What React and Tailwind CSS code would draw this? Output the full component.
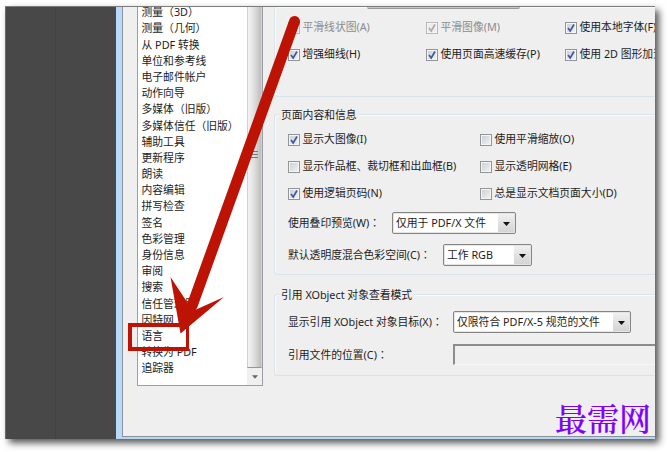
import clsx from 'clsx'

const CATEGORIES = [
  '测量（3D）',
  '测量（几何）',
  '从 PDF 转换',
  '单位和参考线',
  '电子邮件帐户',
  '动作向导',
  '多媒体（旧版）',
  '多媒体信任（旧版）',
  '辅助工具',
  '更新程序',
  '朗读',
  '内容编辑',
  '拼写检查',
  '签名',
  '色彩管理',
  '身份信息',
  '审阅',
  '搜索',
  '信任管理器',
  '因特网',
  '语言',
  '转换为 PDF',
  '追踪器',
]

function Check({ label, checked, disabled, className }) {
  return (
    <div className={clsx('flex h-[27px] shrink-0 items-center whitespace-nowrap', className)}>
      <span className={clsx(
        'flex h-[12px] w-[12px] shrink-0 items-center justify-center border shadow-[inset_0_0_0_1px_#f6f6f6]',
        disabled ? 'border-[#b9b9b9] bg-[#ececec]' : 'border-[#929496] bg-linear-to-br from-[#c9cdd2] to-[#f4f5f6]'
      )}>
        {checked && (
          <svg viewBox="0 0 10 10" className="h-[10px] w-[10px]">
            <path d="M2 5 L4.2 8 L8 1.5" fill="none" strokeWidth="1.7" stroke={disabled ? '#ababab' : '#4058a5'} />
          </svg>
        )}
      </span>
      <span className={clsx('ml-[2.5px]', disabled ? 'text-[#8c8c8c]' : 'text-[#1c1c1c]')}>{label}</span>
    </div>
  )
}

// The TC face centres the full-width colon in its cell
function FieldLabel({ text, className }) {
  return (
    <span className={clsx('shrink-0 whitespace-nowrap', className)}>
      {text}<span className="[font-family:'Noto_Sans_CJK_TC',sans-serif]">：</span>
    </span>
  )
}

function Select({ value, className }) {
  return (
    <div className={clsx('flex h-[22px] shrink-0 items-stretch rounded-[2px] border border-[#858585] bg-white p-px whitespace-nowrap shadow-[inset_0_0_0_1px_#e5e5e5]', className)}>
      <span className="flex flex-1 items-center pl-[2px]">{value}</span>
      <span className="flex w-[16px] items-center justify-center bg-linear-to-b from-[#f0f0f0] to-[#d4d4d4]">
        <svg viewBox="0 0 7 4" className="mt-[2px] h-[4px] w-[7px]">
          <path d="M0 0 H7 L3.5 4 Z" fill="#111" />
        </svg>
      </span>
    </div>
  )
}

function Group({ title, className, children }) {
  return (
    <section className={clsx('rounded-l-[3px] border border-r-0 border-[#d9e3ea] shadow-[inset_1px_1px_0_#f8fafb]', className)}>
      {title && (
        <h2 className="-mt-[9px] ml-[4px] flex h-[18px] w-fit items-center bg-[#efefef] px-[2px] whitespace-nowrap">{title}</h2>
      )}
      {children}
    </section>
  )
}

export default function App() {
  return (
    <div className="h-[452px] w-[668px] overflow-hidden bg-white pt-[6px] pl-[5px] text-[10.8px] leading-none text-[#1c1c1c] [font-family:'Noto_Sans','Noto_Sans_CJK_SC',sans-serif]">
      <div className="relative h-[433px] w-[650px] shadow-[4px_4px_7px_0px_#555]">
        <div className="flex h-full w-full overflow-hidden border-t border-[#7b7d78]">
          {/* Document area behind the dialog */}
          <div className="flex w-[111px] shrink-0 border-l border-[#696969] bg-[#484848]">
            <div className="w-[50px] border-r border-[#424242]" />
          </div>

          {/* Preferences dialog */}
          <div className="flex min-w-0 flex-1 border-b-2 border-l-[6px] border-b-[#b8d6f3] border-l-[#b9d9fa]">
            <div className="flex min-w-0 flex-1 overflow-hidden border-b border-l border-[#8a929c] bg-[#efefef]">
              {/* Category list */}
              <div className="ml-[14px] flex h-[379px] w-[126px] shrink-0 border border-t-0 border-[#9b9ea5] bg-white">
                <ul className="-mt-[2.5px] flex-1 pl-[3.5px]">
                  {CATEGORIES.map(name => (
                    <li key={name} className="flex h-[16.19px] items-center whitespace-nowrap">{name}</li>
                  ))}
                </ul>
                <div className="flex w-[15px] shrink-0 flex-col bg-[#f0f0f0]">
                  <div className="flex h-[361px] flex-col items-center justify-center border-x border-b border-x-[#d0d0d0] border-b-[#979797] bg-linear-to-r from-[#f4f4f4] via-[#dedede] to-[#bdbdbd] pb-[66px]">
                    <div className="h-[7px] w-[7px] border-y border-[#777]">
                      <div className="mt-[2px] h-px bg-[#777]" />
                    </div>
                  </div>
                  <div className="flex flex-1 items-center justify-center">
                    <svg viewBox="0 0 7 4" className="h-[4px] w-[6px]">
                      <path d="M0 0 H7 L3.5 4 Z" fill="#666" />
                    </svg>
                  </div>
                </div>
              </div>

              {/* Page display options */}
              <div className="ml-[11px] min-w-0 flex-1 overflow-hidden">
                <Group className="h-[90px] border-t-0">
                  <div className="ml-[92px] h-[2px] w-[153px] rounded-b-[2px] border-b border-[#999] bg-[#c8c8c8]" />
                  <div className="mt-[5px] flex pl-[13px]">
                    <Check className="w-[138px]" label="平滑线状图(A)" checked disabled />
                    <Check className="w-[139px]" label="平滑图像(M)" checked disabled />
                    <Check label="使用本地字体(F)" checked />
                  </div>
                  <div className="flex pl-[13px]">
                    <Check className="w-[138px]" label="增强细线(H)" checked />
                    <Check className="w-[139px]" label="使用页面高速缓存(P)" checked />
                    <Check label="使用 2D 图形加速" checked />
                  </div>
                </Group>

                <Group title="页面内容和信息" className="mt-[17px] h-[161px]">
                  <div className="mt-[2px] flex pl-[13px]">
                    <Check className="w-[192px]" label="显示大图像(I)" checked />
                    <Check label="使用平滑缩放(O)" />
                  </div>
                  <div className="flex pl-[13px]">
                    <Check className="w-[192px]" label="显示作品框、裁切框和出血框(B)" />
                    <Check label="显示透明网格(E)" />
                  </div>
                  <div className="flex pl-[13px]">
                    <Check className="w-[192px]" label="使用逻辑页码(N)" checked />
                    <Check label="总是显示文档页面大小(D)" />
                  </div>
                  <div className="mt-[5px] flex h-[22px] items-center pl-[13px]">
                    <FieldLabel className="w-[104px]" text="使用叠印预览(W)" />
                    <Select className="w-[124px]" value="仅用于 PDF/X 文件" />
                  </div>
                  <div className="mt-[10px] flex h-[22px] items-center pl-[13px]">
                    <FieldLabel className="w-[155px]" text="默认透明度混合色彩空间(C)" />
                    <Select className="w-[89px]" value="工作 RGB" />
                  </div>
                </Group>

                <Group title="引用 XObject 对象查看模式" className="mt-[19px] h-[82px]">
                  <div className="mt-[7px] flex h-[22px] items-center pl-[13px]">
                    <FieldLabel className="w-[165px]" text="显示引用 XObject 对象目标(X)" />
                    <Select className="w-[178px]" value="仅限符合 PDF/X-5 规范的文件" />
                  </div>
                  <div className="mt-[11px] flex h-[21px] items-center pl-[13px]">
                    <FieldLabel className="w-[165px]" text="引用文件的位置(C)" />
                    <div className="h-full flex-1 border-t-2 border-b border-l-2 border-t-[#8d8d8d] border-b-[#f8f8f8] border-l-[#8d8d8d]" />
                  </div>
                </Group>
              </div>
            </div>
          </div>
        </div>

        {/* Red highlight box and pointer over the list */}
        <div className="absolute top-[317px] left-[123px] h-[28px] w-[61px] border-4 border-r-3 border-[#bd1304]" />
        <svg viewBox="0 0 650 434" className="absolute top-0 left-0 h-[434px] w-[650px]">
          <path d="M289.5 15.5 L187 300" stroke="#bd1304" strokeWidth="11" strokeLinecap="round" />
          <path d="M165.5 271 L182 296 L190 304 L219 291 L175.5 327.5 Z" fill="#bd1304" />
        </svg>

        <div className="absolute top-[393px] left-[550px] text-[32px] leading-[36px] font-medium whitespace-nowrap text-[#8000ff] [-webkit-text-stroke:0.2px_#8000ff] [font-family:'Noto_Serif_CJK_SC','Noto_Sans_CJK_SC',serif]">最需网</div>
      </div>
    </div>
  )
}
